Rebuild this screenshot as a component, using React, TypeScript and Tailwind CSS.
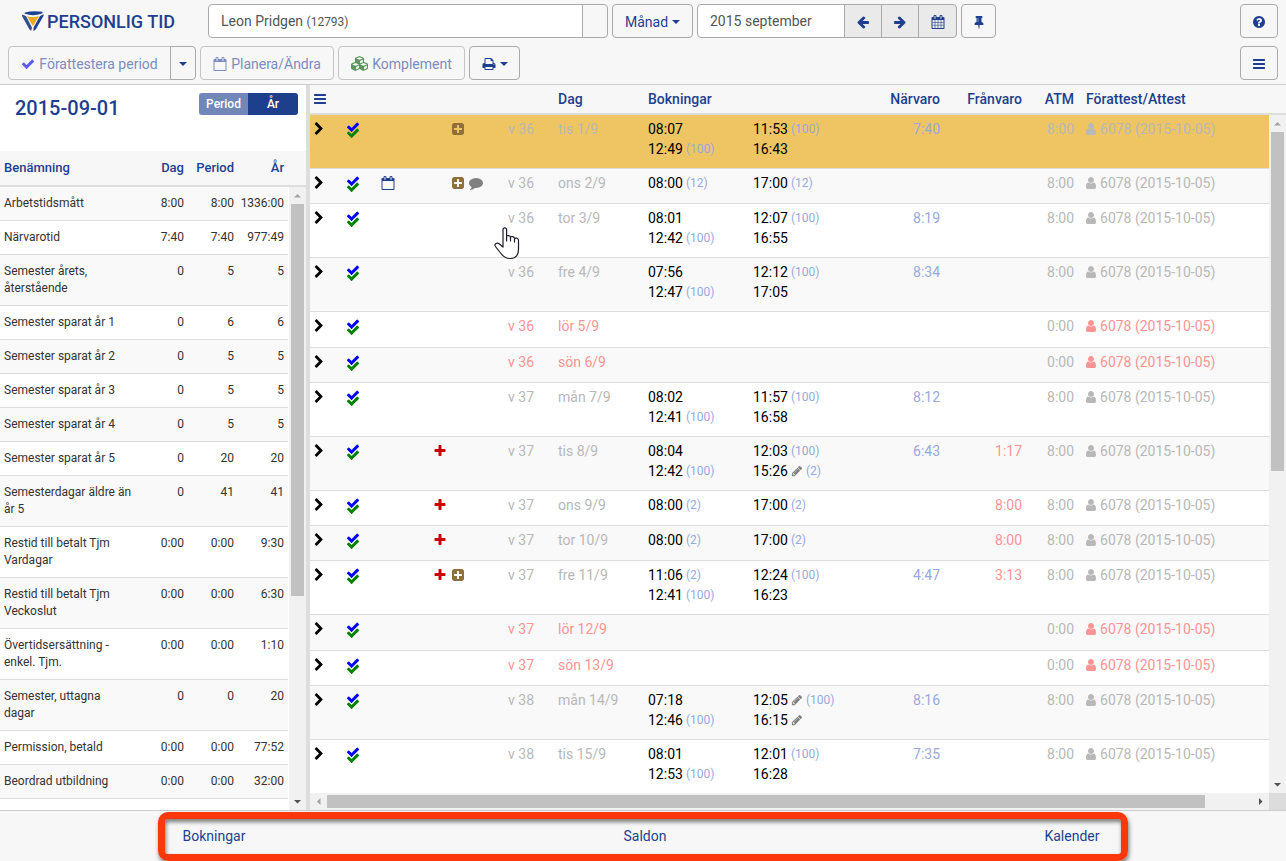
import React from "react";
import { FaCubes } from "react-icons/fa";

const PATHS = {
  check:
    "M1671 566q0 40-28 68l-724 724-136 136q-28 28-68 28t-68-28l-136-136-362-362q-28-28-28-68t28-68l136-136q28-28 68-28t68 28l294 295 656-657q28-28 68-28t68 28l136 136q28 28 28 68z",
  chevron:
    "M1363 877l-742 742q-19 19-45 19t-45-19l-166-166q-19-19-19-45t19-45l531-531-531-531q-19-19-19-45t19-45l166-166q19-19 45-19t45 19l742 742q19 19 19 45t-19 45z",
  arrowLeft:
    "M1664 896v128q0 53-32.5 90.5t-84.5 37.5h-704l293 294q38 36 38 90t-38 90l-75 76q-37 37-90 37-52 0-91-37l-651-652q-37-37-37-90 0-52 37-91l651-650q38-38 91-38 52 0 90 38l75 74q38 38 38 91t-38 91l-293 293h704q52 0 84.5 37.5t32.5 90.5z",
  arrowRight:
    "M1600 960q0 54-37 91l-651 651q-39 37-91 37-51 0-90-37l-75-75q-38-38-38-91t38-91l293-293h-704q-52 0-84.5-37.5t-32.5-90.5v-128q0-53 32.5-90.5t84.5-37.5h704l-293-294q-38-36-38-90t38-90l75-75q38-38 90-38 53 0 91 38l651 651q37 35 37 90z",
  plusSquare:
    "M1408 960v-128q0-26-19-45t-45-19h-320v-320q0-26-19-45t-45-19h-128q-26 0-45 19t-19 45v320h-320q-26 0-45 19t-19 45v128q0 26 19 45t45 19h320v320q0 26 19 45t45 19h128q26 0 45-19t19-45v-320h320q26 0 45-19t19-45zm256-544v960q0 119-84.5 203.5t-203.5 84.5h-960q-119 0-203.5-84.5t-84.5-203.5v-960q0-119 84.5-203.5t203.5-84.5h960q119 0 203.5 84.5t84.5 203.5z",
  plus: "M1600 736v192q0 40-28 68t-68 28h-416v416q0 40-28 68t-68 28h-192q-40 0-68-28t-28-68v-416h-416q-40 0-68-28t-28-68v-192q0-40 28-68t68-28h416v-416q0-40 28-68t68-28h192q40 0 68 28t28 68v416h416q40 0 68 28t28 68z",
  bars: "M1664 1344v128q0 26-19 45t-45 19h-1408q-26 0-45-19t-19-45v-128q0-26 19-45t45-19h1408q26 0 45 19t19 45zm0-512v128q0 26-19 45t-45 19h-1408q-26 0-45-19t-19-45v-128q0-26 19-45t45-19h1408q26 0 45 19t19 45zm0-512v128q0 26-19 45t-45 19h-1408q-26 0-45-19t-19-45v-128q0-26 19-45t45-19h1408q26 0 45 19t19 45z",
  user: "M1536 1399q0 109-62.5 187t-150.5 78h-854q-88 0-150.5-78t-62.5-187q0-85 8.5-160.5t31.5-152 58.5-131 94-89 134.5-34.5q131 128 313 128t313-128q76 0 134.5 34.5t94 89 58.5 131 31.5 152 8.5 160.5zm-256-887q0 159-112.5 271.5t-271.5 112.5-271.5-112.5-112.5-271.5 112.5-271.5 271.5-112.5 271.5 112.5 112.5 271.5z",
  comment:
    "M1792 896q0 174-120 321.5t-326 233-450 85.5q-70 0-145-8-198 175-460 242-49 14-114 22-17 2-30.5-9t-17.5-29v-1q-3-4-.5-12t2-10 4.5-9.5l6-9 7-8.5 8-9q7-8 31-34.5t34.5-38 31-39.5 32.5-51 27-59 26-76q-157-89-247.5-220t-90.5-281q0-130 71-248.5t191-204.5 286-136.5 348-50.5q244 0 450 85.5t326 233 120 321.5z",
  pencil:
    "M491 1536l91-91-235-235-91 91v107h128v128h107zm523-928q0-22-22-22-10 0-17 7l-542 542q-7 7-7 17 0 22 22 22 10 0 17-7l542-542q7-7 7-17zm-54-192l416 416-832 832h-416v-416zm683 96q0 53-37 90l-166 166-416-416 166-165q36-38 90-38 53 0 91 38l235 234q37 39 37 91z",
  pin: "M800 864v-448q0-14-9-23t-23-9-23 9-9 23v448q0 14 9 23t23 9 23-9 9-23zm672 352q0 26-19 45t-45 19h-429l-51 483q-2 12-10.5 20.5t-20.5 8.5h-1q-27 0-32-27l-76-485h-404q-26 0-45-19t-19-45q0-123 78.5-221.5t177.5-98.5v-512q-52 0-90-38t-38-90 38-90 90-38h640q52 0 90 38t38 90-38 90-90 38v512q99 0 177.5 98.5t78.5 221.5z",
  print:
    "M448 1536h896v-256h-896v256zm0-640h896v-384h-160q-40 0-68-28t-28-68v-160h-640v640zm1152 64q0-26-19-45t-45-19-45 19-19 45 19 45 45 19 45-19 19-45zm128 0v416q0 13-9.5 22.5t-22.5 9.5h-224v160q0 40-28 68t-68 28h-960q-40 0-68-28t-28-68v-160h-224q-13 0-22.5-9.5t-9.5-22.5v-416q0-79 56.5-135.5t135.5-56.5h64v-544q0-40 28-68t68-28h672q40 0 88 20t76 48l152 152q28 28 48 76t20 88v256h64q79 0 135.5 56.5t56.5 135.5z",
  question:
    "M1024 1376v-192q0-14-9-23t-23-9h-192q-14 0-23 9t-9 23v192q0 14 9 23t23 9h192q14 0 23-9t9-23zm256-672q0-88-55.5-163t-138.5-116-170-41q-243 0-371 213-15 24 8 42l132 100q7 6 19 6 16 0 25-12 53-68 86-92 34-24 86-24 48 0 85.5 26t37.5 59q0 38-20 61t-68 45q-63 28-115.5 86.5t-52.5 125.5v36q0 14 9 23t23 9h192q14 0 23-9t9-23q0-19 21.5-49.5t54.5-49.5q32-18 49-28.5t46-35 44.5-48 28-60.5 12.5-81zm384 192q0 209-103 385.5t-279.5 279.5-385.5 103-385.5-103-279.5-279.5-103-385.5 103-385.5 279.5-279.5 385.5-103 385.5 103 279.5 279.5 103 385.5z",
  calendar:
    "M192 1664h1408v-1024h-1408v1024zm384-1216v-288q0-14-9-23t-23-9h-64q-14 0-23 9t-9 23v288q0 14 9 23t23 9h64q14 0 23-9t9-23zm768 0v-288q0-14-9-23t-23-9h-64q-14 0-23 9t-9 23v288q0 14 9 23t23 9h64q14 0 23-9t9-23zm384-64v1280q0 52-38 90t-90 38h-1408q-52 0-90-38t-38-90v-1280q0-52 38-90t90-38h128v-96q0-66 47-113t113-47h64q66 0 113 47t47 113v96h384v-96q0-66 47-113t113-47h64q66 0 113 47t47 113v96h128q52 0 90 38t38 90z",
};

function Icon({ name, className = "size-3.5" }: { name: keyof typeof PATHS; className?: string }) {
  return (
    <svg viewBox="0 0 1792 1792" fill="currentColor" className={`shrink-0 ${className}`} aria-hidden="true">
      <path d={PATHS[name]} />
    </svg>
  );
}

function CalendarGrid() {
  return (
    <svg viewBox="0 0 1792 1792" fill="currentColor" className="size-3.5" aria-hidden="true">
      <path d={PATHS.calendar} />
      <path
        d="M512 640v1024M896 640v1024M1280 640v1024M192 960h1408M192 1312h1408"
        stroke="currentColor"
        strokeWidth="72"
        fill="none"
      />
    </svg>
  );
}

function DoubleCheck() {
  return (
    <svg viewBox="0 0 14 20" className="h-5 w-3.5" role="img" aria-label="Attesterad">
      <g transform="translate(0 7) scale(0.0078125)" fill="#008000">
        <path d={PATHS.check} />
      </g>
      <g transform="translate(0 1) scale(0.0078125)" fill="#0000ff">
        <path d={PATHS.check} />
      </g>
    </svg>
  );
}

function Logo() {
  return (
    <svg viewBox="0 0 22 20" className="h-5 w-[22px]" aria-hidden="true">
      <path d="M3 1.600Q11-.7 20 .8Q21.300 1.100 20 2.600Q11 5.600 3 2.800Q2 2.100 3 1.600Z" fill="#1d4191" />
      <path d="M0 3.600L4 5L10 16.500L9.200 19.800Q7.800 19.200 7 17.800L0 5Z" fill="#33508f" />
      <path d="M21.600 3.200L18 5L11.600 16.500L11.400 19.800Q13.200 19.400 14 18L21.600 4.800Z" fill="#1d4191" />
      <path d="M5 5.200Q11 7 17 5.100L11 15.300Z" fill="#eba91f" />
    </svg>
  );
}

function Caret() {
  return (
    <svg viewBox="0 0 8 4" className="h-1 w-2 shrink-0" fill="currentColor" aria-hidden="true">
      <path d="M0 0h8L4 4z" />
    </svg>
  );
}

function ScrollArrow({ dir, dim }: { dir: "up" | "down" | "left" | "right"; dim?: boolean }) {
  const d = {
    up: "M5 10.500h7L8.500 7z",
    down: "M5 7h7l-3.500 3.500z",
    left: "M10.500 5v7L7 8.500z",
    right: "M7 5v7l3.500-3.500z",
  }[dir];
  return (
    <svg viewBox="0 0 17 17" className="size-[17px] shrink-0" fill={dim ? "#a3a3a3" : "#505050"} aria-hidden="true">
      <path d={d} />
    </svg>
  );
}

type Punch = { t: string; code?: string; edited?: boolean };
type Day = {
  week: number;
  day: string;
  ins?: Punch[];
  outs?: Punch[];
  present?: string;
  absent?: string;
  plus?: boolean;
  extra?: boolean;
  note?: boolean;
  plan?: boolean;
};

const p = (t: string, code?: string, edited?: boolean): Punch => ({ t, code, edited });

const days: Day[] = [
  { week: 36, day: "tis 1/9", ins: [p("08:07"), p("12:49", "100")], outs: [p("11:53", "100"), p("16:43")], present: "7:40", extra: true },
  { week: 36, day: "ons 2/9", ins: [p("08:00", "12")], outs: [p("17:00", "12")], extra: true, note: true, plan: true },
  { week: 36, day: "tor 3/9", ins: [p("08:01"), p("12:42", "100")], outs: [p("12:07", "100"), p("16:55")], present: "8:19" },
  { week: 36, day: "fre 4/9", ins: [p("07:56"), p("12:47", "100")], outs: [p("12:12", "100"), p("17:05")], present: "8:34" },
  { week: 36, day: "lör 5/9" },
  { week: 36, day: "sön 6/9" },
  { week: 37, day: "mån 7/9", ins: [p("08:02"), p("12:41", "100")], outs: [p("11:57", "100"), p("16:58")], present: "8:12" },
  { week: 37, day: "tis 8/9", ins: [p("08:04"), p("12:42", "100")], outs: [p("12:03", "100"), p("15:26", "2", true)], present: "6:43", absent: "1:17", plus: true },
  { week: 37, day: "ons 9/9", ins: [p("08:00", "2")], outs: [p("17:00", "2")], absent: "8:00", plus: true },
  { week: 37, day: "tor 10/9", ins: [p("08:00", "2")], outs: [p("17:00", "2")], absent: "8:00", plus: true },
  { week: 37, day: "fre 11/9", ins: [p("11:06", "2"), p("12:41", "100")], outs: [p("12:24", "100"), p("16:23")], present: "4:47", absent: "3:13", plus: true, extra: true },
  { week: 37, day: "lör 12/9" },
  { week: 37, day: "sön 13/9" },
  { week: 38, day: "mån 14/9", ins: [p("07:18"), p("12:46", "100")], outs: [p("12:05", "100", true), p("16:15", undefined, true)], present: "8:16" },
  { week: 38, day: "tis 15/9", ins: [p("08:01"), p("12:53", "100")], outs: [p("12:01", "100"), p("16:28")], present: "7:35" },
];

const balances: [string, string, string, string][] = [
  ["Arbetstidsmått", "8:00", "8:00", "1336:00"],
  ["Närvarotid", "7:40", "7:40", "977:49"],
  ["Semester årets, återstående", "0", "5", "5"],
  ["Semester sparat år 1", "0", "6", "6"],
  ["Semester sparat år 2", "0", "5", "5"],
  ["Semester sparat år 3", "0", "5", "5"],
  ["Semester sparat år 4", "0", "5", "5"],
  ["Semester sparat år 5", "0", "20", "20"],
  ["Semesterdagar äldre än år 5", "0", "41", "41"],
  ["Restid till betalt Tjm Vardagar", "0:00", "0:00", "9:30"],
  ["Restid till betalt Tjm Veckoslut", "0:00", "0:00", "6:30"],
  ["Övertidsersättning - enkel. Tjm.", "0:00", "0:00", "1:10"],
  ["Semester, uttagna dagar", "0", "0", "20"],
  ["Permission, betald", "0:00", "0:00", "77:52"],
  ["Beordrad utbildning", "0:00", "0:00", "32:00"],
];

function Punches({ list = [] }: { list?: Punch[] }) {
  return (
    <>
      {list.map((x) => (
        <div key={x.t} className="flex items-center gap-[3px] leading-5">
          <span>{x.t}</span>
          {x.edited && <Icon name="pencil" className="size-3 text-[#808080]" />}
          {x.code && <span className="text-xs leading-5 text-[#96a9e0]">({x.code})</span>}
        </div>
      ))}
    </>
  );
}

function DayRow({ d, index }: { d: Day; index: number }) {
  const saturday = d.day.startsWith("lör");
  const weekend = saturday || d.day.startsWith("sön");
  const height = d.ins && d.ins.length > 1 ? "h-[54px]" : saturday ? "h-9" : "h-[35px]";
  const bg = index === 0 ? "bg-[#efc563]" : index % 2 ? "bg-[#f9f9f9]" : "bg-white";
  const soft = weekend ? "text-[#ff9494]" : "text-[#b8b8b8]";
  return (
    <tr className={`${height} ${bg} border-b border-[#ddd] align-top *:pt-1`}>
      <td className="pl-0.5">
        <button aria-label={`Visa ${d.day}`} className="flex h-5 items-center text-black">
          <Icon name="chevron" />
        </button>
      </td>
      <td>
        <DoubleCheck />
      </td>
      <td>
        <span className="flex h-5 items-center text-[#1e3f8f]">{d.plan && <Icon name="calendar" />}</span>
      </td>
      <td>
        <span className="flex h-5 items-center gap-1">
          <span className="w-3.5 text-[#cc0000]">{d.plus && <Icon name="plus" />}</span>
          {d.extra && <Icon name="plusSquare" className="size-3.5 text-[#8f703d]" />}
          {d.note && <Icon name="comment" className="size-3.5 text-[#808080]" />}
        </span>
      </td>
      <td className={soft}>v {d.week}</td>
      <td className={soft}>{d.day}</td>
      <td>
        <Punches list={d.ins} />
      </td>
      <td>
        <Punches list={d.outs} />
      </td>
      <td className="text-right text-[#96a9e0]">{d.present}</td>
      <td className="text-right text-[#ff9494]">{d.absent}</td>
      <td className="text-right text-[#b8b8b8]">{weekend ? "0:00" : "8:00"}</td>
      <td className={`pl-2.5 ${soft}`}>
        <span className="flex items-center gap-0.5 whitespace-nowrap">
          <Icon name="user" />
          6078 (2015-10-05)
        </span>
      </td>
    </tr>
  );
}

const box = "flex h-[34px] shrink-0 items-center justify-center border border-[#aaa] text-sm";

function Toolbar() {
  return (
    <header className="flex flex-col gap-2 border-b border-[#ccc] bg-[#f7f7f7] px-2 pt-1 pb-1 text-[#1e3f8f]">
      <div className="flex items-center gap-1">
        <div className="flex w-[196px] items-center gap-[3px] pl-3.5">
          <Logo />
          <h1 className="pt-0.5 text-lg font-medium whitespace-nowrap">PERSONLIG TID</h1>
        </div>
        <div className="flex w-[400px]">
          <button className={`${box} grow rounded-l bg-white px-3 text-[#555]`}>
            <span className="grow text-left">
              Leon Pridgen <span className="text-xs">(12793)</span>
            </span>
          </button>
          <button aria-label="Välj person" className={`${box} -ml-px w-[26px] rounded-r`} />
        </div>
        <button className={`${box} w-[81px] gap-1 rounded pt-px`}>
          Månad <Caret />
        </button>
        <div className="flex w-[260px]">
          <input
            aria-label="Period"
            defaultValue="2015 september"
            className="h-[34px] min-w-0 grow rounded-l border border-[#aaa] bg-white px-3 text-sm text-[#555]"
          />
          <button aria-label="Föregående" className={`${box} -ml-px w-[38px] bg-[#eaeaea] pt-px`}>
            <Icon name="arrowLeft" />
          </button>
          <button aria-label="Nästa" className={`${box} -ml-px w-[38px] bg-[#eaeaea] pt-px`}>
            <Icon name="arrowRight" />
          </button>
          <button aria-label="Kalender" className={`${box} -ml-px w-[39px] rounded-r bg-[#eaeaea] pt-px`}>
            <CalendarGrid />
          </button>
        </div>
        <button aria-label="Fäst" className={`${box} w-[35px] rounded pt-px`}>
          <Icon name="pin" />
        </button>
        <button aria-label="Hjälp" className={`${box} ml-auto w-[38px] rounded pt-px`}>
          <Icon name="question" />
        </button>
      </div>
      <div className="flex items-center gap-1">
        <div className="flex">
          <button className={`${box} w-[163px] gap-1 rounded-l border-[#c4c4c4] pt-px text-[#7b8dbd]`}>
            <Icon name="check" className="size-3.5 text-[#5c5cff]" />
            Förattestera period
          </button>
          <button aria-label="Fler val" className={`${box} -ml-px w-[26px] rounded-r pt-px`}>
            <Caret />
          </button>
        </div>
        <button className={`${box} w-[134px] gap-1 rounded border-[#c4c4c4] pt-px text-[#7b8dbd]`}>
          <Icon name="calendar" />
          Planera/Ändra
        </button>
        <button className={`${box} w-[127px] gap-1 rounded border-[#c4c4c4] pt-px text-[#7b8dbd]`}>
          <FaCubes className="size-[17px] text-[#5c965c]" />
          Komplement
        </button>
        <button aria-label="Skriv ut" className={`${box} w-[51px] gap-1 rounded pt-px`}>
          <Icon name="print" />
          <Caret />
        </button>
        <button aria-label="Meny" className={`${box} ml-auto w-[38px] rounded pt-px`}>
          <Icon name="bars" />
        </button>
      </div>
    </header>
  );
}

function BalancePanel() {
  return (
    <aside className="flex w-[310px] shrink-0 flex-col border-r-4 border-[#ddd] bg-white text-xs text-[#333]">
      <div className="flex h-[66px] shrink-0 items-start justify-between pt-2 pr-2 pl-[15px]">
        <h2 className="text-xl leading-[30px] font-medium text-[#1e3f8f]">2015-09-01</h2>
        <div className="flex h-[22px] overflow-hidden rounded-[3px] font-medium text-white">
          <button className="w-[49px] bg-[#7087b8]">Period</button>
          <button className="w-[50px] bg-[#1e3f8b]">År</button>
        </div>
      </div>
      <div className="flex min-h-0 grow overflow-hidden">
        <table className="h-px grow table-fixed border-collapse">
          <colgroup>
            <col />
            <col className="w-[50px]" />
            <col className="w-[50px]" />
            <col className="w-[54px]" />
          </colgroup>
          <thead>
            <tr className="h-[35px] border-b-2 border-[#ddd] bg-[#f7f7f7] text-[13px] text-[#1e3f8f] *:font-medium">
              <th className="pl-1 text-left">Benämning</th>
              <th className="text-right">Dag</th>
              <th className="text-right">Period</th>
              <th className="pr-1 text-right">År</th>
            </tr>
          </thead>
          <tbody>
            {balances.map(([name, day, period, year], i) => (
              <tr
                key={name}
                className={`border-b border-[#ddd] align-top leading-[17px] *:py-2 ${i % 2 ? "bg-white" : "bg-[#f9f9f9]"}`}
              >
                <td className="pl-1">{name}</td>
                <td className="text-right">{day}</td>
                <td className="text-right">{period}</td>
                <td className="pr-1 text-right">{year}</td>
              </tr>
            ))}
          </tbody>
        </table>
        <div className="flex w-[18px] shrink-0 flex-col">
          <div className="h-9 shrink-0 border-b-2 border-[#ddd] bg-[#f7f7f7]" />
          <div className="ml-px flex grow flex-col bg-[#f1f1f1]">
            <ScrollArrow dir="up" dim />
            <div className="mx-0.5 h-[63%] bg-[#c1c1c1]" />
            <div className="grow" />
            <ScrollArrow dir="down" />
          </div>
        </div>
      </div>
    </aside>
  );
}

function DayPanel() {
  return (
    <main className="flex min-w-0 grow flex-col text-sm leading-5 text-black">
      <div className="flex min-h-0 grow overflow-hidden bg-white">
        <div className="min-w-0 grow">
          <table className="w-full table-fixed border-collapse">
            <colgroup>
              <col className="w-9" />
              <col className="w-[35px]" />
              <col className="w-[52px]" />
              <col className="w-[75px]" />
              <col className="w-[50px]" />
              <col className="w-[90px]" />
              <col className="w-[105px]" />
              <col className="w-[105px]" />
              <col className="w-[82px]" />
              <col className="w-[82px]" />
              <col className="w-[52px]" />
              <col />
            </colgroup>
            <thead>
              <tr className="h-[29px] border-b-2 border-[#ddd] bg-[#f7f7f7] text-left text-[#1e3f8f] *:font-medium">
                <th className="pl-[3px]">
                  <button aria-label="Kolumner" className="flex items-center">
                    <Icon name="bars" />
                  </button>
                </th>
                <th colSpan={4} />
                <th>Dag</th>
                <th colSpan={2}>Bokningar</th>
                <th className="text-right">Närvaro</th>
                <th className="text-right">Frånvaro</th>
                <th className="text-right">ATM</th>
                <th className="pl-3">Förattest/Attest</th>
              </tr>
            </thead>
            <tbody>
              {days.map((d, i) => (
                <DayRow key={d.day} d={d} index={i} />
              ))}
            </tbody>
          </table>
        </div>
        <div className="flex w-[17px] shrink-0 flex-col">
          <div className="h-[30px] shrink-0 border-b-2 border-[#ddd] bg-[#f7f7f7]" />
          <div className="flex grow flex-col bg-[#f1f1f1]">
            <ScrollArrow dir="up" dim />
            <div className="mx-0.5 h-1/2 bg-[#c1c1c1]" />
            <div className="grow" />
            <ScrollArrow dir="down" />
          </div>
        </div>
      </div>
      <div className="flex h-[17px] shrink-0 bg-[#f1f1f1]">
        <ScrollArrow dir="left" dim />
        <div className="my-0.5 w-[90%] bg-[#c1c1c1]" />
        <div className="grow" />
        <ScrollArrow dir="right" />
        <div className="w-[17px] shrink-0 bg-[#dcdcdc]" />
      </div>
    </main>
  );
}

function HandPointer() {
  return (
    <svg
      viewBox="0 0 26 33"
      className="pointer-events-none absolute top-[227px] left-[494px] h-[33px] w-[26px]"
      aria-hidden="true"
    >
      <path
        d="M9 19V2.800Q9 .8 10.800.8T12.600 2.800V14V9.800Q12.700 8.400 14.600 8.600T16.500 10.400V14V10.800Q16.700 9.200 18.600 9.600T20.500 11.400V15V12.600Q20.800 10.800 22.600 11.200T24.500 13.200V22Q24.500 31.500 16 31.500Q10.500 31.500 7 26.500L1.400 19.500Q.2 17.500 2 16.500T5.500 17L9 20Z"
        fill="#fff"
        stroke="#1b1b2b"
        strokeWidth="1.200"
        strokeLinejoin="round"
      />
    </svg>
  );
}

export default function App() {
  return (
    <div className="relative flex h-screen flex-col overflow-hidden bg-[#f7f7f7] font-[Roboto,sans-serif]">
      <Toolbar />
      <div className="flex min-h-0 grow">
        <BalancePanel />
        <DayPanel />
      </div>
      <footer className="h-[51px] shrink-0 border-t border-[#ccc] bg-[#f7f7f7] pt-px">
        <nav className="mx-[12.25%] flex h-[49px] items-center justify-between rounded-[10px] border-7 border-[#fb370b] pr-[22px] pb-0.5 pl-[18px] text-sm text-[#1e3f8f] shadow-[1px_3px_4px_rgba(0,0,0,0.5),inset_1px_3px_4px_rgba(0,0,0,0.5)]">
          <a href="#bokningar">Bokningar</a>
          <a href="#saldon">Saldon</a>
          <a href="#kalender">Kalender</a>
        </nav>
      </footer>
      <HandPointer />
    </div>
  );
}
